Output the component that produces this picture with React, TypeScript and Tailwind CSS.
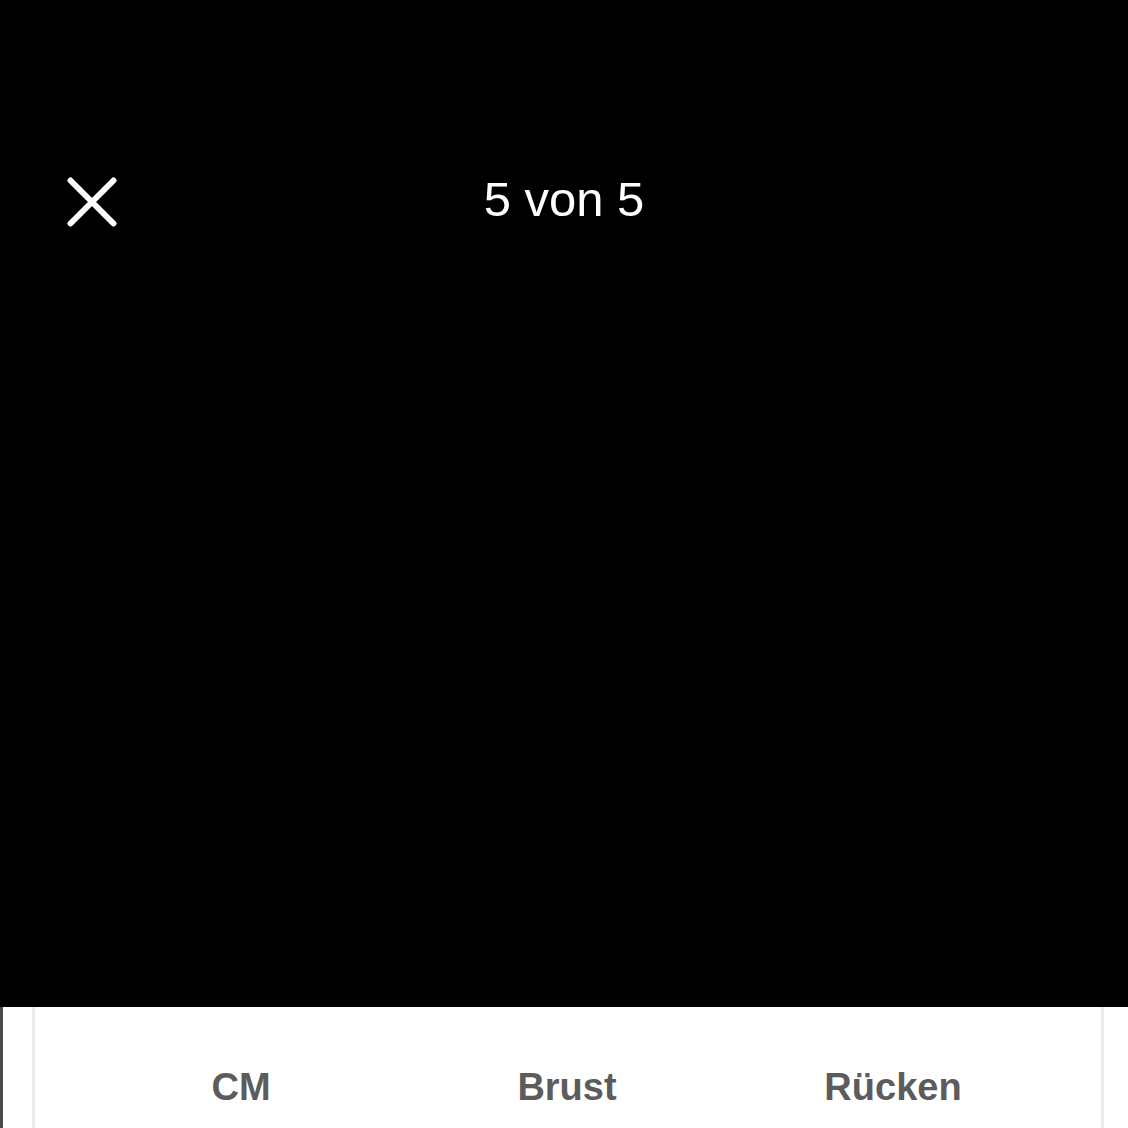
export default function App() {
  return (
    <div className="w-[1128px] h-[1128px] bg-black flex flex-col overflow-hidden" style={{ fontFamily: '"Liberation Sans", Arial, sans-serif' }}>
      <div className="h-[1007px] bg-black flex flex-col">
        <div className="mt-[175px] h-[49px] relative flex items-center justify-center">
          <svg className="absolute left-[67px] top-[2px]" width="50" height="50" viewBox="0 0 50 50" fill="none">
            <path d="M3.5 3.5 L46.5 46.5 M46.5 3.5 L3.5 46.5" stroke="white" strokeWidth="6" strokeLinecap="round" />
          </svg>
          <span className="text-white text-[49px] leading-none">5 von 5</span>
        </div>
      </div>
      <div className="flex-1 bg-white flex">
        <div className="w-[3px] bg-[#4a4a4a]" />
        <div className="w-[29px]" />
        <div className="flex-1 border-l-[3px] border-r-[3px] border-[#ebebeb] flex pl-[43px] pr-[44px] pt-[61px]">
          <div className="w-[326px] text-center text-[38px] leading-none font-bold text-[#5c5c5c]">CM</div>
          <div className="w-[326px] text-center text-[38px] leading-none font-bold text-[#5c5c5c]">Brust</div>
          <div className="w-[326px] text-center text-[38px] leading-none font-bold text-[#5c5c5c]">Rücken</div>
        </div>
        <div className="w-[24px]" />
      </div>
    </div>
  );
}
